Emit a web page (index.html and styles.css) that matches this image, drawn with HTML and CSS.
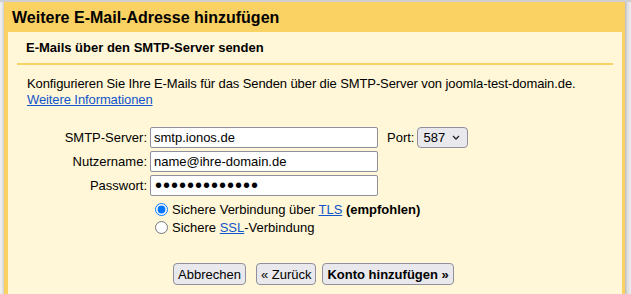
FILE: index.html
```html
<!DOCTYPE html>
<html lang="de">
<head>
  <meta charset="UTF-8">
  <title>Weitere E-Mail-Adresse hinzufügen</title>
  <link rel="stylesheet" href="styles.css">
</head>
<body>
  <div class="window">
    <div class="edge-left"></div>
    <div class="dialog">
      <h1 class="title">Weitere E-Mail-Adresse hinzufügen</h1>
      <div class="panel">
        <h2 class="subtitle">E-Mails über den SMTP-Server senden</h2>
        <p class="intro">
          Konfigurieren Sie Ihre E-Mails für das Senden über die SMTP-Server von joomla-test-domain.de.<br>
          <a href="#">Weitere Informationen</a>
        </p>

        <div class="form">
          <label class="label" for="server">SMTP-Server:</label>
          <div class="field-row">
            <input class="text" id="server" type="text" value="smtp.ionos.de">
            <label class="port-label" for="port">Port:</label>
            <span class="select-wrap">
              <select class="select" id="port">
                <option>587</option>
                <option>465</option>
              </select>
              <svg class="chevron" width="8" height="5" viewBox="0 0 8 5"><path d="M1 1l3 3 3-3" fill="none" stroke="#222" stroke-width="1.3"/></svg>
            </span>
          </div>

          <label class="label" for="user">Nutzername:</label>
          <div class="field-row">
            <input class="text" id="user" type="text" value="name@ihre-domain.de">
          </div>

          <label class="label" for="pass">Passwort:</label>
          <div class="field-row">
            <input class="text password" id="pass" type="password" value="geheim1234567">
          </div>

          <div></div>
          <div class="options">
            <label class="option"><input type="radio" name="security" checked><span>Sichere Verbindung über <a href="#">TLS</a> <b>(empfohlen)</b></span></label>
            <label class="option"><input type="radio" name="security"><span>Sichere <a href="#">SSL</a>-Verbindung</span></label>
          </div>
        </div>

        <div class="actions">
          <button class="btn cancel">Abbrechen</button>
          <button class="btn">« Zurück</button>
          <button class="btn primary">Konto hinzufügen »</button>
        </div>
      </div>
    </div>
    <div class="edge-right"></div>
  </div>
</body>
</html>
```

FILE: styles.css
```css
html, body {
  margin: 0;
  height: 100%;
}
body {
  font-family: "Liberation Sans", Arial, sans-serif;
  font-size: 13px;
  color: #000;
  background: #fff;
  overflow: hidden;
}
.window {
  display: flex;
  height: 100%;
  border-top: 2px solid #cfcfcf;
  box-sizing: border-box;
}
.edge-left {
  width: 4px;
  background: linear-gradient(to right, #f2f2f2, #e2e2e2 70%, #c9c9c9);
}
.edge-right {
  width: 6px;
  background: linear-gradient(to right, #b9b9b9, #dcdcdc 35%, #efefef);
}
.dialog {
  flex: 1;
  display: flex;
  flex-direction: column;
  background: #fad163;
}
.title {
  margin: 0;
  height: 30px;
  padding-left: 8px;
  font-size: 16px;
  line-height: 31px;
  font-weight: bold;
}
.panel {
  flex: 1;
  margin: 0 3px 0 4px;
  background: #fff7d7;
}
.subtitle {
  margin: 0 9px;
  padding: 8px 9px;
  font-size: 13px;
  line-height: 15px;
  font-weight: bold;
  border-bottom: 2px solid #fad163;
}
.intro {
  margin: 11px 0 0;
  padding-left: 19px;
  line-height: 16px;
  letter-spacing: -0.1px;
}
a {
  color: #15c;
}
.form {
  display: grid;
  grid-template-columns: 139px auto;
  column-gap: 3px;
  row-gap: 3px;
  margin-top: 19px;
  align-items: center;
}
.label {
  text-align: right;
}
.field-row {
  display: flex;
  align-items: center;
}
.text {
  width: 228px;
  height: 21px;
  box-sizing: border-box;
  margin: 0;
  padding: 0 3px;
  border: 1px solid #8f8f9d;
  border-radius: 2px;
  background: #fff;
  font-family: inherit;
  font-size: 13px;
  color: #000;
}
.text.password {
  font-size: 20px;
  letter-spacing: 1px;
  padding-left: 4px;
}
.port-label {
  margin-left: 9px;
}
.select-wrap {
  position: relative;
  margin-left: 3px;
  margin-top: -1px;
}
.select {
  appearance: none;
  width: 51px;
  height: 21px;
  box-sizing: border-box;
  margin: 0;
  padding: 0 0 0 5px;
  border: 1px solid #8f8f9d;
  border-radius: 4px;
  background: #e9e9ed;
  font-family: inherit;
  font-size: 13px;
  color: #000;
}
.chevron {
  position: absolute;
  right: 8px;
  top: 8px;
  pointer-events: none;
}
.options {
  display: flex;
  flex-direction: column;
  margin-top: 1px;
}
.option {
  display: flex;
  align-items: center;
  height: 18px;
}
.option input {
  width: 13px;
  height: 13px;
  margin: 0 4px 0 5px;
}
.actions {
  display: flex;
  margin-top: 27px;
  padding-left: 165px;
}
.btn {
  height: 22px;
  margin: 0 6px 0 0;
  padding: 0 4px;
  border: 1px solid #8f8f9d;
  border-radius: 4px;
  background: #e9e9ed;
  font-family: inherit;
  font-size: 13px;
  color: #000;
}
.btn.cancel {
  margin-right: 10px;
}
.btn.primary {
  font-weight: bold;
}
```
